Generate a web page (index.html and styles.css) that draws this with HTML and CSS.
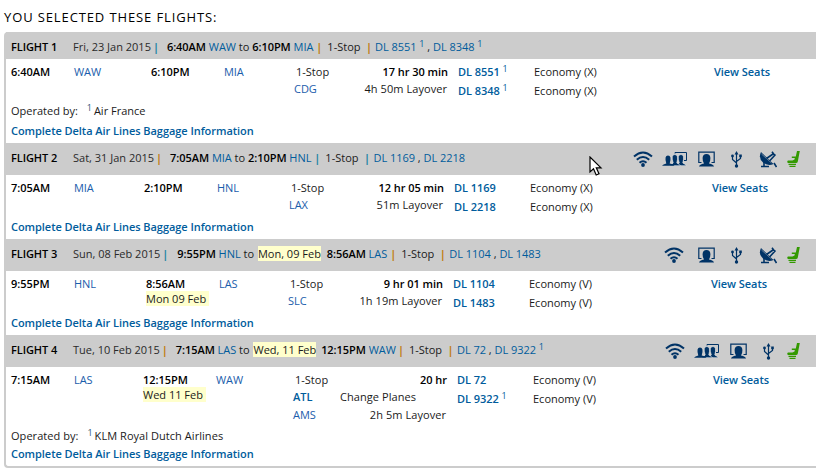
FILE: index.html
```
<!DOCTYPE html>
<html lang="en">
<head>
  <meta charset="UTF-8">
  <meta name="viewport" content="width=device-width, initial-scale=1.0">
  <title>Selected Flights</title>
  <link rel="stylesheet" href="styles.css">
</head>
<body>
  <!-- amenity icons -->
  <svg class="sprite" width="0" height="0">
    <symbol id="wifi" viewBox="0 0 20 16">
      <path d="M1 5.500Q10-2.500 19 5.500M3.800 8.700Q10 3.200 16.200 8.700M6.500 11.800Q10 8.600 13.500 11.800" fill="none" stroke="#036" stroke-width="2"/>
      <circle cx="10" cy="14" r="1.900" fill="#036"/>
    </symbol>
    <symbol id="people" viewBox="0 0 25 14">
      <path d="M13 1.500V.5H24.500V8.500H22" fill="none" stroke="#036"/>
      <g fill="#036" stroke="#eee" stroke-width=".6">
        <path d="M13 13.700Q16 12.500 17.300 11Q14.500 2.500 19 2.500Q23 2.500 20.800 11Q23 12 24.500 13.700Z"/>
        <path d="M7 13.700Q10 12.500 11.200 11Q8.500 2.500 12.800 2.500Q17 2.500 14.800 11Q17 12 18.500 13.700Z"/>
      </g>
      <path d="M0 13.700Q1 12.300 4.300 11.500Q2 3.500 6 3.500Q10 3.500 7.700 11.500Q11 12 12.500 13.700Z" fill="#036"/>
    </symbol>
    <symbol id="screen" viewBox="0 0 17 16">
      <path d="M3.500 11.500H.8V1.200H16.200V11.500H13.500" fill="none" stroke="#036" stroke-width="1.200"/>
      <path d="M1 15.500Q1.500 13.500 6 12.500Q4.500 10.500 4.600 7Q4.800 3 8.500 3Q12.200 3 12.400 7Q12.500 10.500 11 12.500Q15.500 13.500 16 15.500Z" fill="#036"/>
    </symbol>
    <symbol id="usb" viewBox="0 0 11 17">
      <path d="M5.500 3V14M1.500 5V8.500L5.500 12M9.500 5V7.500L5.500 10.500" fill="none" stroke="#036" stroke-width="1.200"/>
      <path d="M5.500 0L7.500 3.500H3.500Z" fill="#036"/>
      <circle cx="5.500" cy="15" r="1.700" fill="#036"/>
      <circle cx="1.500" cy="5" r="1.400" fill="#036"/>
      <path d="M8.200 3.500H10.800V6.200H8.200Z" fill="#036"/>
    </symbol>
    <symbol id="dish" viewBox="0 0 18 17">
      <path d="M2 1Q-1 7 4 11.500Q9 15.500 14.500 13Z" fill="#036"/>
      <path d="M2.500 3L12.500 12" stroke="#ccc" stroke-width=".5"/>
      <path d="M7.500 7.500L14 3M13 .8L15.800 4.500M10.500 10L16.500 3.500M5 11V15M2 15.500H10M15 12L17.500 16" fill="none" stroke="#036" stroke-width="1.600"/>
    </symbol>
    <symbol id="seat" viewBox="0 0 13 16">
      <path d="M10 0H12.800L10.800 10.500Q10.500 12 9 12H1Q-.5 10.500 1 9.500H5.500L7.500 8.500L7.800 7H4.800V5.500H8.800Z" fill="#390"/>
      <path d="M1.500 13.300H9M2.500 15.300H8.500" stroke="#390" stroke-width="1.200"/>
    </symbol>
  </svg>

  <h1>YOU SELECTED THESE FLIGHTS:</h1>

  <div class="flights">
    <div class="flight flight1">
      <div class="bar">
        <span class="number">FLIGHT 1</span>
        <span class="date">Fri, 23 Jan 2015</span>
        <i class="sep first teal">|</i>
        <span class="route"><b>6:40AM</b> <a>WAW</a> to <b>6:10PM</b> <a>MIA</a></span>
        <i class="sep">|</i>
        <span class="stops">1-Stop</span>
        <i class="sep last">|</i>
        <span class="codes"><a>DL 8551 <sup>1</sup></a> , <a>DL 8348 <sup>1</sup></a></span>
      </div>
      <div class="details">
        <div><b>6:40AM</b></div>
        <div><a class="city">WAW</a></div>
        <div><b>6:10PM</b></div>
        <div><a class="city">MIA</a></div>
        <div class="stop"><span class="one">1-Stop</span><a class="city">CDG</a></div>
        <div class="length"><b>17 hr 30 min</b><span>4h 50m Layover</span></div>
        <div class="codelist"><a>DL 8551 <sup>1</sup></a><a>DL 8348 <sup>1</sup></a></div>
        <div class="cabin"><span>Economy (X)</span><span>Economy (X)</span></div>
        <div><a>View Seats</a></div>
      </div>
      <p class="operated">Operated by: <sup>1</sup>Air France</p>
      <p class="baggage"><a>Complete Delta Air Lines Baggage Information</a></p>
    </div>

    <div class="flight flight2">
      <div class="bar">
        <span class="number">FLIGHT 2</span>
        <span class="date">Sat, 31 Jan 2015</span>
        <i class="sep first">|</i>
        <span class="route"><b>7:05AM</b> <a>MIA</a> to <b>2:10PM</b> <a>HNL</a></span>
        <i class="sep teal">|</i>
        <span class="stops">1-Stop</span>
        <i class="sep last teal">|</i>
        <span class="codes"><a>DL 1169</a> , <a>DL 2218</a></span>
        <div class="icons">
          <svg class="wifi" width="20" height="16"><use href="#wifi"/></svg>
          <svg class="people" width="25" height="14"><use href="#people"/></svg>
          <svg class="screen" width="17" height="16"><use href="#screen"/></svg>
          <svg class="usb" width="11" height="17"><use href="#usb"/></svg>
          <svg class="dish" width="18" height="17"><use href="#dish"/></svg>
          <svg class="seat" width="13" height="16"><use href="#seat"/></svg>
        </div>
      </div>
      <div class="details">
        <div><b>7:05AM</b></div>
        <div><a class="city">MIA</a></div>
        <div><b>2:10PM</b></div>
        <div><a class="city">HNL</a></div>
        <div class="stop"><span class="one">1-Stop</span><a class="city">LAX</a></div>
        <div class="length"><b>12 hr 05 min</b><span>51m Layover</span></div>
        <div class="codelist"><a>DL 1169</a><a>DL 2218</a></div>
        <div class="cabin"><span>Economy (X)</span><span>Economy (X)</span></div>
        <div><a>View Seats</a></div>
      </div>
      <p class="baggage"><a>Complete Delta Air Lines Baggage Information</a></p>
    </div>

    <div class="flight flight3">
      <div class="bar">
        <span class="number">FLIGHT 3</span>
        <span class="date">Sun, 08 Feb 2015</span>
        <i class="sep first teal">|</i>
        <span class="route"><b>9:55PM</b> <a>HNL</a> to <mark>Mon, 09 Feb</mark> <b>8:56AM</b> <a>LAS</a></span>
        <i class="sep">|</i>
        <span class="stops">1-Stop</span>
        <i class="sep last">|</i>
        <span class="codes"><a>DL 1104</a> , <a>DL 1483</a></span>
        <div class="icons">
          <svg class="wifi" width="20" height="16"><use href="#wifi"/></svg>
          <svg class="screen" width="17" height="16"><use href="#screen"/></svg>
          <svg class="usb" width="11" height="17"><use href="#usb"/></svg>
          <svg class="dish" width="18" height="17"><use href="#dish"/></svg>
          <svg class="seat" width="13" height="16"><use href="#seat"/></svg>
        </div>
      </div>
      <div class="details">
        <div><b>9:55PM</b></div>
        <div><a class="city">HNL</a></div>
        <div><b>8:56AM</b><mark>Mon 09 Feb</mark></div>
        <div><a class="city">LAS</a></div>
        <div class="stop"><span class="one">1-Stop</span><a class="city">SLC</a></div>
        <div class="length"><b>9 hr 01 min</b><span>1h 19m Layover</span></div>
        <div class="codelist"><a>DL 1104</a><a>DL 1483</a></div>
        <div class="cabin"><span>Economy (V)</span><span>Economy (V)</span></div>
        <div><a>View Seats</a></div>
      </div>
      <p class="baggage"><a>Complete Delta Air Lines Baggage Information</a></p>
    </div>

    <div class="flight flight4">
      <div class="bar">
        <span class="number">FLIGHT 4</span>
        <span class="date">Tue, 10 Feb 2015</span>
        <i class="sep first">|</i>
        <span class="route"><b>7:15AM</b> <a>LAS</a> to <mark>Wed, 11 Feb</mark> <b>12:15PM</b> <a>WAW</a></span>
        <i class="sep">|</i>
        <span class="stops">1-Stop</span>
        <i class="sep last">|</i>
        <span class="codes"><a>DL 72</a> , <a>DL 9322 <sup>1</sup></a></span>
        <div class="icons">
          <svg class="wifi" width="20" height="16"><use href="#wifi"/></svg>
          <svg class="people" width="25" height="14"><use href="#people"/></svg>
          <svg class="screen" width="17" height="16"><use href="#screen"/></svg>
          <svg class="usb" width="11" height="17"><use href="#usb"/></svg>
          <svg class="seat" width="13" height="16"><use href="#seat"/></svg>
        </div>
      </div>
      <div class="details">
        <div><b>7:15AM</b></div>
        <div><a class="city">LAS</a></div>
        <div><b>12:15PM</b><mark>Wed 11 Feb</mark></div>
        <div><a class="city">WAW</a></div>
        <div class="stop"><span class="one">1-Stop</span><a>ATL</a><a class="city">AMS</a></div>
        <div class="length"><b>20 hr</b><span class="change">Change Planes</span><span>2h 5m Layover</span></div>
        <div class="codelist"><a>DL 72</a><a>DL 9322 <sup>1</sup></a></div>
        <div class="cabin"><span>Economy (V)</span><span>Economy (V)</span></div>
        <div><a>View Seats</a></div>
      </div>
      <p class="operated">Operated by: <sup>1</sup>KLM Royal Dutch Airlines</p>
      <p class="baggage"><a>Complete Delta Air Lines Baggage Information</a></p>
    </div>
  </div>

  <svg class="pointer" width="14" height="21" viewBox="0 0 14 21">
    <path d="M1 1V16L4.500 12.800L7.200 19L10 17.800L7.300 11.800H12Z" fill="#fff" stroke="#000" stroke-width="1.200"/>
  </svg>
</body>
</html>
```
FILE: styles.css
```
* {
  box-sizing: border-box;
}

body {
  margin: 0;
  height: 470px;
  overflow: hidden;
  position: relative;
  background: #fff;
  color: #1a1a1a;
  font-family: "Open Sans", sans-serif;
  font-size: 11px;
  line-height: 18px;
  white-space: nowrap;
}

.sprite {
  display: block;
}

h1 {
  margin: 0;
  padding: 8px 0 0 4px;
  height: 32px;
  font-size: 13px;
  font-weight: 400;
  letter-spacing: 0.88px;
  color: #000;
}

b {
  font-weight: 600;
  letter-spacing: -0.05px;
  color: #000;
}

a {
  font-weight: 600;
  letter-spacing: -0.05px;
  color: #005c9c;
}

a.city {
  font-weight: 400;
  color: #1a5dab;
}

mark {
  background: #ffc;
  color: #1a1a1a;
}

sup {
  font-size: 9px;
  font-weight: 500;
  line-height: 0;
  vertical-align: 4px;
}

p {
  margin: 0;
  padding-left: 5px;
}

.flights {
  border-left: 2px solid #ccc;
  border-bottom: 2px solid #ccc;
  border-radius: 4px 0 0 4px;
  margin-left: 4px;
  height: 436px;
}

.bar {
  display: flex;
  align-items: center;
  height: 32px;
  padding: 0 0 2px 5px;
  background: #ccc;
}

.bar a {
  font-weight: 500;
  letter-spacing: -0.04px;
}

.bar mark {
  margin: 0 3px 0 1px;
}

.number {
  width: 62px;
  font-weight: 600;
  letter-spacing: -0.08px;
  color: #000;
}

.date {
  color: #2a2a2a;
}

.sep {
  width: 14px;
  padding-left: 3px;
  font-style: normal;
  font-weight: 700;
  color: #c07d10;
}

.sep.first {
  width: 16px;
  padding-left: 2px;
}

.sep.last {
  width: 15px;
  padding-left: 5.5px;
}

.sep.teal {
  color: #2585a5;
}

.flight1 .sep.last {
  width: 14.5px;
}

.flight3 .sep.first {
  width: 17px;
}

.icons {
  display: flex;
  align-items: center;
  margin-left: auto;
  padding: 2px 16px 0 0;
}

.people {
  margin-left: 9px;
}

.screen {
  margin-left: 11px;
}

.wifi + .screen {
  margin-left: 14px;
}

.usb {
  margin-left: 16px;
}

.dish {
  margin-left: 17px;
}

.seat {
  margin-left: 10px;
}

.usb + .seat {
  margin-left: 13px;
}

.details {
  display: grid;
  height: 42px;
  padding: 4px 0 0 5px;
}

.details > div {
  display: flex;
  flex-direction: column;
  align-items: flex-start;
}

.details mark {
  height: 15px;
  line-height: 15px;
  margin-top: -2px;
  padding-right: 3px;
}

.details .length {
  align-items: flex-end;
  padding-right: 10px;
}

.length span {
  margin-right: 1px;
  letter-spacing: 0.06px;
}

.stop > :nth-child(2),
.length > :nth-child(2) {
  margin-top: -1px;
}

.codelist,
.cabin {
  line-height: 19px;
  margin-top: -1px;
}

.one {
  padding-left: 2px;
}

.operated sup {
  margin: 0 2px 0 6px;
  color: #357;
}

.flight4 .operated {
  letter-spacing: 0.05px;
}

.flight1 .bar {
  height: 27px;
  padding: 2px 0 0 5px;
}

.flight1 .details {
  grid-template-columns: 63px 77px 73px 70px 90px 74px 76px 180px 1fr;
}

.flight1 p {
  line-height: 20px;
}

.flight1 {
  height: 111px;
}

.flight2,
.flight3 {
  height: 96px;
}

.flight2 .details {
  grid-template-columns: 63px 70px 73px 72px 85px 80px 76px 182px 1fr;
}

.flight3 .details {
  grid-template-columns: 63px 72px 73px 69px 85px 80px 76px 182px 1fr;
}

.flight2 p,
.flight3 p {
  line-height: 20px;
}

.flight4 .bar mark {
  margin-right: 2px;
}

.flight4 .route {
  margin-right: -1px;
}

.flight4 .details {
  height: 60px;
  grid-template-columns: 63px 69px 73px 77px 47px 117px 76px 180px 1fr;
}

.length .change {
  margin-right: 31px;
}

.pointer {
  position: absolute;
  left: 589px;
  top: 156px;
}
```
